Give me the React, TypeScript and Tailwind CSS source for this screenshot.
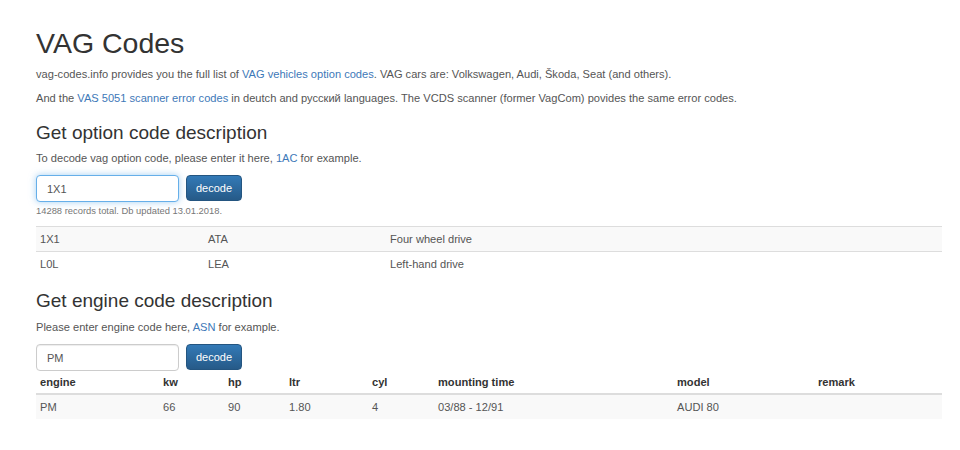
import React from "react";

const linkCls = "text-[#3d78b8]";

type CodeRow = { code: string; family: string; text: string };

const optionRows: CodeRow[] = [
  { code: "1X1", family: "ATA", text: "Four wheel drive" },
  { code: "L0L", family: "LEA", text: "Left-hand drive" },
];

const engineHead = ["engine", "kw", "hp", "ltr", "cyl", "mounting time", "model", "remark"];
const engineRows = [["PM", "66", "90", "1.80", "4", "03/88 - 12/91", "AUDI 80", ""]];

const DecodeForm: React.FC<{ value: string; focused?: boolean }> = ({ value, focused }) => (
  <div className="flex items-start gap-[7px] h-[27px]">
    <input
      readOnly
      value={value}
      className={
        "w-[143px] h-[27px] rounded-[4px] border px-[10px] text-[11px] text-[#555] bg-white outline-none " +
        (focused
          ? "border-[#66afe9] shadow-[0_0_7px_rgba(102,175,233,0.6)]"
          : "border-[#ccc] shadow-[inset_0_1px_1px_rgba(0,0,0,0.075)]")
      }
    />
    <button className="w-[56px] h-[26px] rounded-[4px] border border-[#245580] bg-gradient-to-b from-[#337ab7] to-[#265a88] text-white text-[11px] leading-none">
      decode
    </button>
  </div>
);

export default function App() {
  return (
    <div
      className="w-[960px] h-[450px] bg-white text-[#555] pt-[23px] pl-[36px] pr-[18px]"
      style={{ fontFamily: '"Liberation Sans", Arial, sans-serif' }}
    >
      <h1 className="text-[28.5px] leading-[40px] text-[#333]">VAG Codes</h1>

      <p className="text-[11.1px] leading-[24px] mt-[-1px]">
        vag-codes.info provides you the full list of{" "}
        <a className={linkCls}>VAG vehicles option codes</a>. VAG cars are: Volkswagen, Audi, Škoda, Seat (and
        others).
      </p>
      <p className="text-[11.1px] leading-[24px]">
        And the <a className={linkCls}>VAS 5051 scanner error codes</a> in deutch and русский languages. The VCDS
        scanner (former VagCom) povides the same error codes.
      </p>

      {/* option codes */}
      <h2 className="text-[19px] leading-[24px] text-[#333] mt-[11px]">Get option code description</h2>
      <p className="text-[11.1px] leading-[24px] mt-[1px]">
        To decode vag option code, please enter it here, <a className={linkCls}>1AC</a> for example.
      </p>
      <div className="mt-[5px]">
        <DecodeForm value="1X1" focused />
      </div>
      <div className="text-[9.4px] leading-[14px] text-[#777] mt-[2px]">
        14288 records total. Db updated 13.01.2018.
      </div>

      <div className="mt-[8px] w-[906px] text-[11.1px]">
        {optionRows.map((r, i) => (
          <div
            key={r.code}
            className={
              "grid grid-cols-[168px_182px_1fr] h-[25px] items-center px-[4px] border-t border-[#ddd] " +
              (i % 2 === 0 ? "bg-[#f9f9f9]" : "")
            }
          >
            <span>{r.code}</span>
            <span>{r.family}</span>
            <span>{r.text}</span>
          </div>
        ))}
      </div>

      {/* engine codes */}
      <h2 className="text-[19px] leading-[24px] text-[#333] mt-[13px]">Get engine code description</h2>
      <p className="text-[11.1px] leading-[24px] mt-[2px]">
        Please enter engine code here, <a className={linkCls}>ASN</a> for example.
      </p>
      <div className="mt-[5px]">
        <DecodeForm value="PM" />
      </div>

      <div className="w-[906px] text-[11.1px]">
        <div className="grid grid-cols-[123px_65px_61px_83px_66px_239px_141px_1fr] h-[24px] items-center px-[4px] border-b-2 border-[#ddd] font-bold text-[#333]">
          {engineHead.map((h) => (
            <span key={h}>{h}</span>
          ))}
        </div>
        {engineRows.map((row) => (
          <div
            key={row[0]}
            className="grid grid-cols-[123px_65px_61px_83px_66px_239px_141px_1fr] h-[24px] items-center px-[4px] bg-[#f9f9f9]"
          >
            {row.map((c, j) => (
              <span key={j}>{c}</span>
            ))}
          </div>
        ))}
      </div>
    </div>
  );
}
